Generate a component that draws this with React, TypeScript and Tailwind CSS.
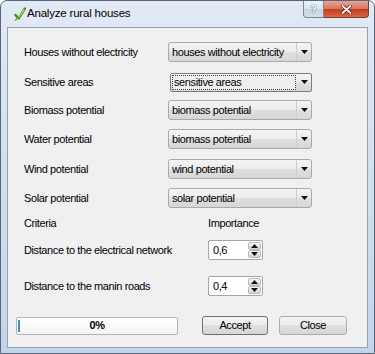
import React from 'react';

// Combo rows of the dialog
interface ComboRow {
  label: string;
  value: string;
  mt: string;
  focus?: boolean;
}

const rows: ComboRow[] = [
  { label: 'Houses without electricity', value: 'houses without electricity', mt: 'mt-[14px]' },
  { label: 'Sensitive areas', value: 'sensitive areas', mt: 'mt-[10px]', focus: true },
  { label: 'Biomass potential', value: 'biomass potential', mt: 'mt-[8px]' },
  { label: 'Water potential', value: 'biomass potential', mt: 'mt-[9px]' },
  { label: 'Wind potential', value: 'wind potential', mt: 'mt-[10px]' },
  { label: 'Solar potential', value: 'solar potential', mt: 'mt-[9px]' },
];

const btnBg = 'bg-[linear-gradient(#f4f4f4,#ececec_50%,#e0e0e0_50%,#d6d6d6)]';

function DownArrow() {
  return (
    <svg width="7" height="4" viewBox="0 0 7 4">
      <path d="M0 0h7L3.5 4z" fill="#111" />
    </svg>
  );
}

function UpArrow() {
  return (
    <svg width="7" height="4" viewBox="0 0 7 4">
      <path d="M0 4h7L3.5 0z" fill="#111" />
    </svg>
  );
}

function Combo({ value, focus }: { value: string; focus?: boolean }) {
  if (focus) {
    return (
      <div className={`ml-[2px] flex h-[19px] w-[142px] rounded-[2px] border border-[#7c7c7c] ${btnBg}`}>
        <div className="m-[1px] flex flex-1 items-center whitespace-nowrap border border-dotted border-[#444] bg-[#efefef] pl-[1px]">
          {value}
        </div>
        <div className="flex w-[14px] items-center justify-center">
          <DownArrow />
        </div>
      </div>
    );
  }
  return (
    <div className={`flex h-[20px] w-[144px] rounded-[3px] border border-[#a9a9a9] ${btnBg}`}>
      <div className="flex flex-1 items-center whitespace-nowrap pl-[3px]">{value}</div>
      <div className="flex w-[15px] items-center justify-center border-l border-[#cdcdcd]">
        <DownArrow />
      </div>
    </div>
  );
}

function Spin({ value }: { value: string }) {
  return (
    <div className="flex h-[20px] w-[55px] rounded-[2px] border border-[#a3a6ad] bg-white">
      <div className="flex flex-1 items-center pl-[4px]">{value}</div>
      <div className="flex w-[14px] flex-col py-[1px] pr-[1px]">
        <div className={`flex flex-1 items-center justify-center rounded-[2px] border border-[#b9b9b9] ${btnBg}`}>
          <UpArrow />
        </div>
        <div className={`flex flex-1 items-center justify-center rounded-[2px] border border-[#b9b9b9] ${btnBg}`}>
          <DownArrow />
        </div>
      </div>
    </div>
  );
}

function AppIcon() {
  return (
    <svg width="12" height="14" viewBox="0 0 12 14">
      <path d="M1.5 8 L4.5 11.5 L11 1.5" fill="none" stroke="#3f8f1c" strokeWidth="2.4" strokeLinecap="round" strokeLinejoin="round" />
      <path d="M5 10 L10 3" stroke="#d8e04a" strokeWidth="1.2" strokeLinecap="round" />
      <path d="M1.5 13 L3.5 11" stroke="#6bb52b" strokeWidth="1.5" strokeLinecap="round" />
    </svg>
  );
}

export default function App() {
  return (
    <div className="h-[354px] w-[375px] bg-white font-['Liberation_Sans',Arial,sans-serif] text-[11px] tracking-[-0.4px] text-black">
      <div className="flex h-full flex-col rounded-t-[7px] border border-[#56667a] bg-gradient-to-b from-[#e1eaf5] to-[#c4d4e7]">
        {/* title bar */}
        <div className="flex h-[26px] items-start">
          <div className="flex h-[25px] items-center pl-[13px]">
            <AppIcon />
            <span className="ml-[1px] text-[11.5px] tracking-[-0.2px]">Analyze rural houses</span>
          </div>
          <div className="ml-auto mr-[5px] flex h-[17px]">
            <div className="flex w-[21px] items-center justify-center rounded-bl-[4px] border border-t-0 border-[#7a889b] bg-[linear-gradient(#eef3f9,#dbe4ef_50%,#c6d3e3_50%,#d3deea)] text-[11px] font-bold text-white [text-shadow:0_0_1px_#4d5b6c,0_0_1px_#4d5b6c]">
              ?
            </div>
            <div className="flex w-[45px] items-center justify-center rounded-br-[4px] border border-l-0 border-t-0 border-[#7e3a30] bg-[linear-gradient(#e8a493,#d47560_50%,#c23a22_50%,#d9673f)]">
              <svg width="11" height="9" viewBox="0 0 11 9">
                <path d="M1.5 1 L9.5 8 M9.5 1 L1.5 8" stroke="#5a1a10" strokeWidth="3.2" strokeLinecap="round" />
                <path d="M1.5 1 L9.5 8 M9.5 1 L1.5 8" stroke="#fff" strokeWidth="1.8" strokeLinecap="round" />
              </svg>
            </div>
          </div>
        </div>

        {/* client area */}
        <div className="mx-[6px] mb-[5px] flex flex-1 flex-col border border-[#93a3b6] bg-[#f0f0f0]">
          {rows.map((row) => (
            <div key={row.label} className={`flex h-[20px] items-center ${row.mt}`}>
              <div className="w-[160px] pl-[16px]">{row.label}</div>
              <Combo value={row.value} focus={row.focus} />
            </div>
          ))}

          <div className="mt-[8px] flex h-[14px] items-center">
            <div className="w-[200px] pl-[16px]">Criteria</div>
            <div>Importance</div>
          </div>

          <div className="mt-[10px] flex h-[20px] items-center">
            <div className="w-[200px] pl-[16px]">Distance to the electrical network</div>
            <Spin value="0,6" />
          </div>

          <div className="mt-[16px] flex h-[20px] items-center">
            <div className="w-[200px] pl-[16px]">Distance to the manin roads</div>
            <Spin value="0,4" />
          </div>

          <div className="mt-[20px] flex h-[19px] items-center pl-[8px]">
            <div className="relative flex h-[18px] w-[162px] items-center justify-center rounded-[2px] border border-[#b4b4b4] bg-gradient-to-b from-white to-[#f4f4f4]">
              <div className="absolute left-[1px] top-[2px] h-[12px] w-[2px] bg-[#3d8ad8]" />
              <span className="font-bold">0%</span>
            </div>
            <button className={`ml-[24px] flex h-[19px] w-[66px] items-center justify-center rounded-[3px] border border-[#6f6f6f] ${btnBg}`}>
              Accept
            </button>
            <button className={`ml-[11px] flex h-[19px] w-[68px] items-center justify-center rounded-[3px] border border-[#adadad] ${btnBg}`}>
              Close
            </button>
          </div>
        </div>
      </div>
    </div>
  );
}
